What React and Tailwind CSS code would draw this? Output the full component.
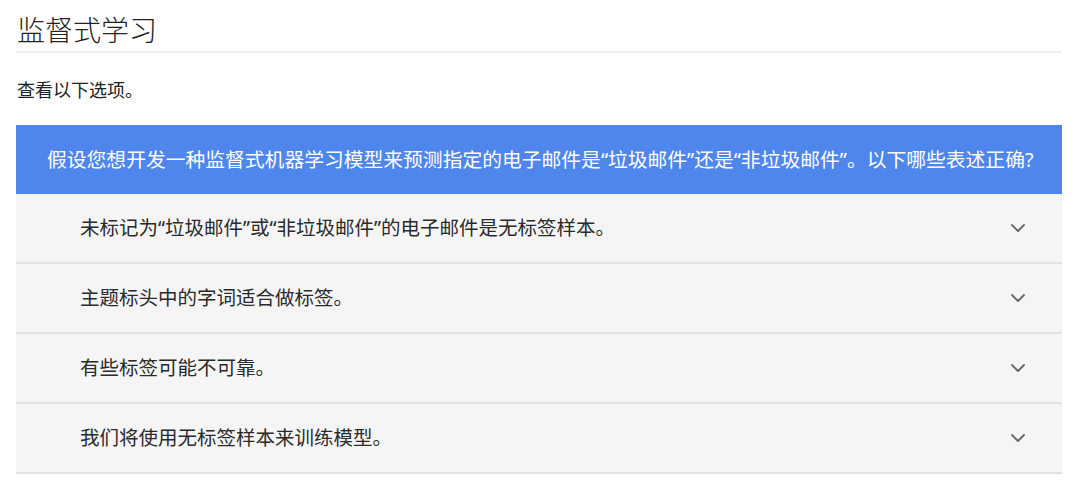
import React from 'react'

const options = [
  '未标记为“垃圾邮件”或“非垃圾邮件”的电子邮件是无标签样本。',
  '主题标头中的字词适合做标签。',
  '有些标签可能不可靠。',
  '我们将使用无标签样本来训练模型。',
]

function Chevron() {
  return (
    <svg width="16" height="10" viewBox="0 0 16 10" fill="none">
      <path d="M2 2l6 6 6-6" stroke="#666" strokeWidth="1.8" strokeLinecap="round" strokeLinejoin="round" />
    </svg>
  )
}

export default function App() {
  return (
    <div className="w-[1080px] h-[490px] bg-white px-4 text-[#222]" style={{ fontFamily: '"Noto Sans", "Noto Sans CJK SC", sans-serif' }}>
      <div className="w-[1046px]">
        <h1 className="text-[28px] font-light leading-[40px] pt-[10px] pb-[1px] pl-[1px] border-b-2 border-[#eeeeee]">监督式学习</h1>
        <p className="text-[18px] leading-[26px] mt-[24px] pl-[1px]">查看以下选项。</p>
        <div className="mt-[22px]">
          <div className="bg-[#4f86ec] text-white text-[19.8px] h-[69px] flex items-center pl-[31px]">
            假设您想开发一种监督式机器学习模型来预测指定的电子邮件是“垃圾邮件”还是“非垃圾邮件”。以下哪些表述正确?
          </div>
          {options.map(o => (
            <div key={o} className="bg-[#f5f5f5] h-[70px] border-b-2 border-[#e2e2e2] flex items-center justify-between pl-[64px] pr-[36px] text-[19.5px] text-[#2a2a2a]">
              <span>{o}</span>
              <Chevron />
            </div>
          ))}
        </div>
      </div>
    </div>
  )
}
